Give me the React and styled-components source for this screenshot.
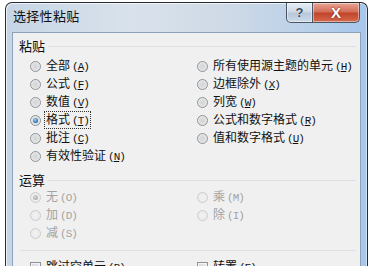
import React from "react";
import styled, { createGlobalStyle } from "styled-components";

const Global = createGlobalStyle`
  html, body {
    margin: 0;
    padding: 0;
    background: #ffffff;
    overflow: hidden;
  }
  body {
    font-family: "Noto Sans CJK SC", "Liberation Sans", sans-serif;
  }
`;

const Page = styled.div`
  width: 374px;
  height: 266px;
  padding: 2px 0 0 5px;
  box-sizing: border-box;
  overflow: hidden;
`;

const Window = styled.div`
  width: 363px;
  height: 290px;
  box-sizing: border-box;
  border: 1px solid #272b30;
  border-bottom: none;
  border-radius: 7px 7px 0 0;
  padding: 0 6px;
  display: flex;
  flex-direction: column;
  background: linear-gradient(90deg, #c6d5e5 0%, #d9e2ec 35%, #cfdae6 60%, #b9d0e9 85%, #a6c6ec 100%);
  box-shadow: inset 1px 1px 0 rgba(255, 255, 255, 0.7), inset -1px 0 0 rgba(255, 255, 255, 0.5);
`;

const TitleBar = styled.div`
  height: 29px;
  display: flex;
  align-items: flex-start;
  justify-content: space-between;
`;

const Title = styled.div`
  font-size: 13px;
  line-height: 13px;
  color: #111;
  padding: 6px 0 0 1px;
  letter-spacing: 0.3px;
`;

const Buttons = styled.div`
  display: flex;
  margin-right: 1px;
`;

const CapButton = styled.div`
  height: 20px;
  width: ${(p) => p.$w}px;
  box-sizing: border-box;
  border: 1px solid #4a5663;
  border-top: none;
  display: flex;
  align-items: center;
  justify-content: center;
  font-family: "Liberation Sans", sans-serif;
  font-weight: bold;
  font-size: ${(p) => (p.$close ? 15 : 13)}px;
  line-height: 1;
  color: ${(p) => (p.$close ? "#ffffff" : "#3c4b5c")};
  text-shadow: ${(p) => (p.$close ? "0 0 2px #6b1408" : "0 0 1px #ffffff")};
  border-radius: ${(p) => (p.$close ? "0 0 5px 0" : "0 0 0 5px")};
  border-left: ${(p) => (p.$close ? "none" : "1px solid #4a5663")};
  background: ${(p) =>
    p.$close
      ? "linear-gradient(180deg, #e8a493 0%, #d4705a 45%, #c2452c 55%, #d46a4c 100%)"
      : "linear-gradient(180deg, #e6edf4 0%, #cdd9e6 45%, #b9c8d9 55%, #ccdbe9 100%)"};
  box-shadow: inset 0 0 0 1px rgba(255, 255, 255, 0.45);
`;

const Client = styled.div`
  flex: 1;
  background: #f0f0f0;
  border: 1px solid #8ea3bb;
  border-bottom: none;
  padding: 4px 0 0 6px;
  display: flex;
  flex-direction: column;
`;

const GroupLabel = styled.div`
  display: flex;
  align-items: center;
  gap: 3px;
  height: 16px;
  font-size: 13px;
  color: #111;
  margin-right: 4px;
  margin-top: ${(p) => p.$top || 0}px;
  &::after {
    content: "";
    flex: 1;
    height: 1px;
    background: #dcdfe3;
    margin-top: 2px;
  }
`;

const OptionGrid = styled.div`
  display: grid;
  grid-template-columns: 167px 1fr;
  grid-auto-rows: 18px;
  padding-left: 11px;
  margin-top: ${(p) => p.$top}px;
`;

const Option = styled.div`
  display: flex;
  align-items: center;
  gap: 3px;
  font-size: 12px;
  color: ${(p) => (p.$disabled ? "#a3a3a3" : "#111")};
  white-space: nowrap;
  grid-column: ${(p) => p.$col};
`;

const Radio = styled.span`
  width: 11px;
  height: 11px;
  border-radius: 50%;
  box-sizing: border-box;
  border: 1px solid ${(p) => (p.$disabled ? "#cdcdcd" : "#8f9396")};
  background: ${(p) =>
    p.$disabled
      ? "radial-gradient(circle at 50% 50%, #f2f2f2 0%, #e8e8e8 100%)"
      : "radial-gradient(circle at 50% 50%, #d2d4d6 0%, #dcdedf 45%, #f4f4f4 100%)"};
  display: flex;
  align-items: center;
  justify-content: center;
  margin-right: 1px;
  flex: none;
  &::after {
    content: "";
    width: 5px;
    height: 5px;
    border-radius: 50%;
    display: ${(p) => (p.$checked ? "block" : "none")};
    background: ${(p) =>
      p.$disabled
        ? "radial-gradient(circle at 40% 35%, #d6d6d6, #9e9e9e)"
        : "radial-gradient(circle at 40% 35%, #a4d2f6, #2a6db0 70%, #19426f)"};
  }
`;

const Check = styled.span`
  width: 11px;
  height: 11px;
  box-sizing: border-box;
  border: 1px solid #8f9396;
  background: linear-gradient(135deg, #d4d6d8, #f6f6f6);
  box-shadow: inset 0 0 0 1px #f4f4f4;
  margin-right: 1px;
  flex: none;
`;

const Text = styled.span`
  padding: 0 1px;
  line-height: 14px;
  outline: ${(p) => (p.$focus ? "1px dotted #333" : "none")};
`;

const Key = styled.span`
  font-family: "Liberation Mono", monospace;
  font-size: 11px;
  margin-left: 2px;
  letter-spacing: -1px;
  u {
    text-decoration-thickness: 1px;
    text-underline-offset: 1px;
  }
`;

const Divider = styled.div`
  height: 1px;
  background: #dcdfe3;
  margin: ${(p) => p.$m};
`;

const pasteItems = [
  ["全部", "A", 1],
  ["所有使用源主题的单元", "H", 2],
  ["公式", "F", 1],
  ["边框除外", "X", 2],
  ["数值", "V", 1],
  ["列宽", "W", 2],
  ["格式", "T", 1, true],
  ["公式和数字格式", "R", 2],
  ["批注", "C", 1],
  ["值和数字格式", "U", 2],
  ["有效性验证", "N", 1],
];

const opItems = [
  ["无", "O", 1, true],
  ["乘", "M", 2],
  ["加", "D", 1],
  ["除", "I", 2],
  ["减", "S", 1],
];

const RadioOption = ({ label, k, col, checked, disabled }) => (
  <Option $col={col} $disabled={disabled}>
    <Radio $checked={checked} $disabled={disabled} />
    <Text $focus={checked && !disabled}>
      {label}
      <Key>
        ({disabled ? k : <u>{k}</u>})
      </Key>
    </Text>
  </Option>
);

export default function App() {
  return (
    <Page>
      <Global />
      <Window>
        <TitleBar>
          <Title>选择性粘贴</Title>
          <Buttons>
            <CapButton $w={27}>?</CapButton>
            <CapButton $w={47} $close>
              X
            </CapButton>
          </Buttons>
        </TitleBar>
        <Client>
          <GroupLabel>粘贴</GroupLabel>
          <OptionGrid $top={4}>
            {pasteItems.map(([label, k, col, checked]) => (
              <RadioOption key={label} label={label} k={k} col={col} checked={checked} />
            ))}
          </OptionGrid>
          <GroupLabel $top={6}>运算</GroupLabel>
          <OptionGrid $top={1}>
            {opItems.map(([label, k, col, checked]) => (
              <RadioOption key={label} label={label} k={k} col={col} checked={checked} disabled />
            ))}
          </OptionGrid>
          <Divider $m="8px 4px 0 1px" />
          <OptionGrid $top={7}>
            <Option $col={1}>
              <Check />
              <Text>
                跳过空单元<Key>(<u>B</u>)</Key>
              </Text>
            </Option>
            <Option $col={2}>
              <Check />
              <Text>
                转置<Key>(<u>E</u>)</Key>
              </Text>
            </Option>
          </OptionGrid>
        </Client>
      </Window>
    </Page>
  );
}
